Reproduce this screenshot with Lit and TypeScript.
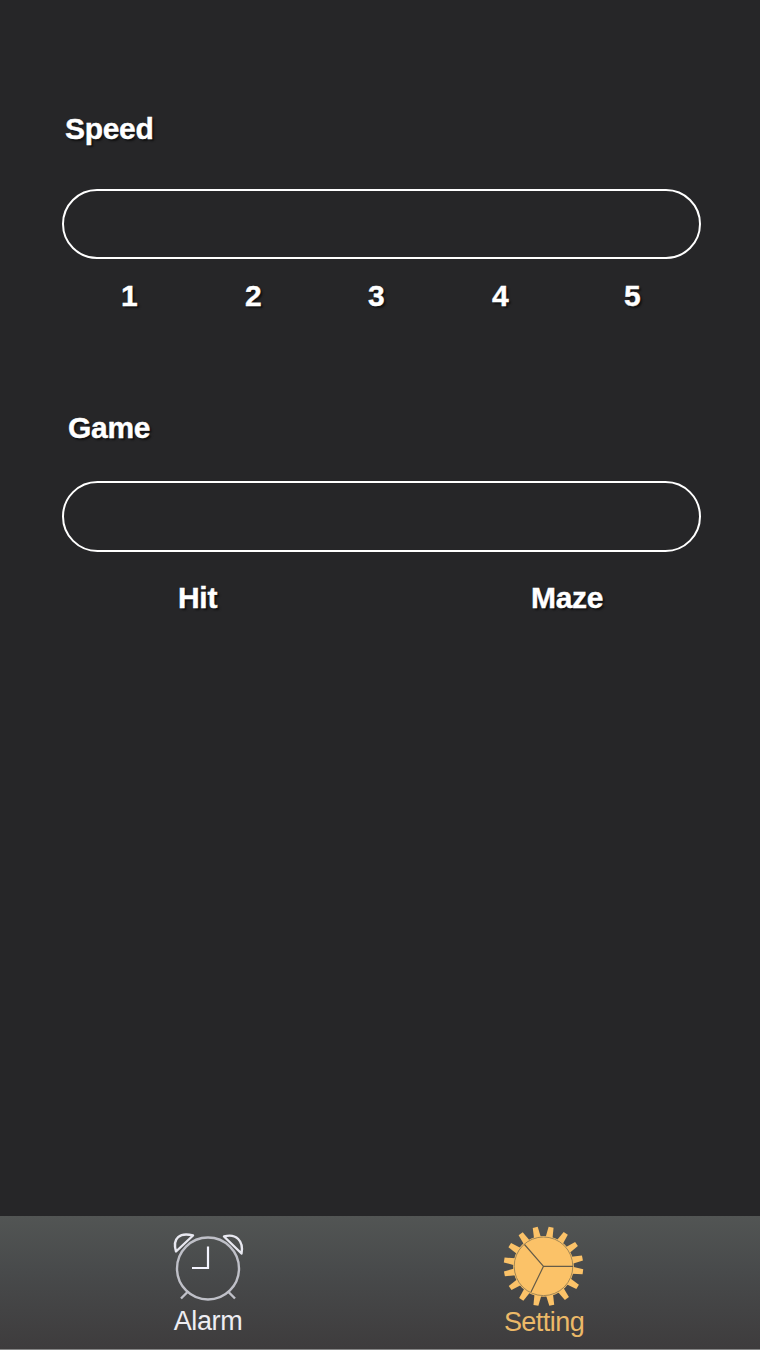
import { LitElement, html, css, svg } from "lit";
import { customElement } from "lit/decorators.js";

const TEETH = [11, 34, 56, 78, 98, 121, 144, 168, 191, 214, 237, 259, 279, 302, 325, 348];

@customElement("app-root")
export class AppRoot extends LitElement {
  static styles = css`
    :host {
      display: flex;
      flex-direction: column;
      box-sizing: border-box;
      width: 760px;
      height: 1350px;
      overflow: hidden;
      background: #262628;
      color: #fff;
      font-family: "Liberation Sans", Arial, sans-serif;
    }
    main {
      flex: 1;
      padding: 112px 59px 0 62px;
    }
    h2, .scale {
      margin: 0;
      font-size: 30px;
      font-weight: bold;
      line-height: 34px;
      -webkit-text-stroke: 0.4px #fff;
      text-shadow: 2px 2px 2px rgba(0, 0, 0, 0.6);
    }
    h2 { padding-left: 3px; letter-spacing: -0.3px; }
    .game h2 { padding-left: 6px; }
    .track {
      box-sizing: border-box;
      height: 70px;
      border: 2px solid #fff;
      border-radius: 36px;
    }
    .speed .track { margin-top: 43px; }
    .speed .scale {
      display: grid;
      grid-template-columns: 124px 123px 124px 132px 1fr;
      padding-left: 59px;
      margin-top: 20px;
    }
    .game { margin-top: 98px; }
    .game .track { height: 71px; margin-top: 36px; }
    .game .scale {
      display: grid;
      grid-template-columns: 353px 1fr;
      padding-left: 116px;
      margin-top: 29px;
      letter-spacing: -0.3px;
    }
    nav {
      box-sizing: border-box;
      display: grid;
      grid-template-columns: 336px 336px;
      padding: 8px 0 0 40px;
      height: 134px;
      border-bottom: 1px solid #858585;
      background: linear-gradient(#525554, #484a4b 42%, #3e3c3d);
    }
    .tab {
      display: flex;
      flex-direction: column;
      align-items: center;
      font-size: 27px;
      line-height: 32px;
      color: #ededf3;
    }
    .tab svg { display: block; width: 84px; height: 84px; flex: none; }
    .tab span { margin-top: -3px; letter-spacing: -0.4px; }
    .tab.active { color: #ecb968; }
    .tab.active span { margin-top: -2px; letter-spacing: -0.55px; }
  `;

  render() {
    return html`
      <main>
        <section class="speed">
          <h2>Speed</h2>
          <div class="track"></div>
          <div class="scale">${[1, 2, 3, 4, 5].map((n) => html`<span>${n}</span>`)}</div>
        </section>
        <section class="game">
          <h2>Game</h2>
          <div class="track"></div>
          <div class="scale"><span>Hit</span><span>Maze</span></div>
        </section>
      </main>
      <nav>
        <div class="tab">
          <svg viewBox="0 0 84 84" fill="none" stroke="#bfc0c8" stroke-width="2.4">
            <circle cx="42" cy="44.5" r="31"></circle>
            <path d="M42 22.5V44H26" stroke="#f4f4ff" stroke-width="2.2"></path>
            <path d="M10 27.5C6 14 14 8 27 11.5Z M58 12.5C70 9 78 17 75.5 29.5Z" stroke="#e8e8f0" stroke-linejoin="round"></path>
            <path d="M22 67.5L15 74.5M62 67.5L69 74.5"></path>
          </svg>
          <span>Alarm</span>
        </div>
        <div class="tab active">
          <svg viewBox="0 0 84 84">
            ${TEETH.map((a) => svg`<path d="M-3.5 -29L-2.5 -39.8H2.5L3.5 -29Z" fill="#fbc268" transform="translate(41.5 42.3) rotate(${a})"></path>`)}
            <circle cx="41.5" cy="42.3" r="30.4" fill="#fbc268"></circle>
            <circle cx="41.5" cy="42.3" r="29.3" fill="none" stroke="#8a7750" stroke-width="0.8"></circle>
            <path d="M41.5 42.3H71M41.5 42.3L22.5 20.5M41.5 42.3L29 68" fill="none" stroke="#665c48" stroke-width="1.2"></path>
          </svg>
          <span>Setting</span>
        </div>
      </nav>
    `;
  }
}
